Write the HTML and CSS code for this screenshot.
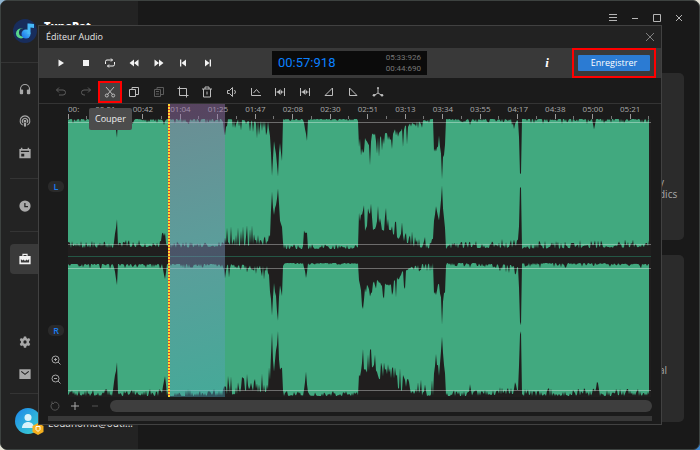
FILE: index.html
```html
<!DOCTYPE html>
<html lang="fr">
<head>
<meta charset="utf-8">
<meta name="viewport" content="width=device-width, initial-scale=1">
<title>TunePat – Éditeur Audio</title>
<link rel="stylesheet" href="styles.css">
</head>
<body>
<div class="window">
  <aside class="sidebar">
    <header class="brand">
      <svg class="logo" viewBox="0 0 24 24" aria-hidden="true">
        <defs><linearGradient id="note" x1="0" y1="1" x2="1" y2="0"><stop offset="0" stop-color="#1668e8"/><stop offset="1" stop-color="#52d0fb"/></linearGradient></defs>
        <circle cx="12" cy="12" r="12" fill="#182d5c"/>
        <circle cx="8" cy="14.500" r="5" fill="#59d68a"/>
        <circle cx="10" cy="13.500" r="4" fill="#182d5c"/>
        <circle cx="13" cy="15" r="4.500" fill="url(#note)"/>
        <path d="M14.500 15V4.500h1.500L21 5v4l-3.500-.5V15z" fill="#46b9f8"/>
      </svg>
      <strong>TunePat</strong>
    </header>
    <nav class="rail">
      <a href="#" aria-label="Musique"><svg viewBox="0 0 16 16"><path d="M2 10V8a6 6 0 0 1 12 0v2" class="line"/><rect x="1" y="8.500" width="4.500" height="6.500" rx="1.500"/><rect x="10.500" y="8.500" width="4.500" height="6.500" rx="1.500"/></svg></a>
      <a href="#" aria-label="Podcast"><svg viewBox="0 0 16 16"><path d="M5 13.500a6.500 6.500 0 1 1 6 0M5.500 10.500a3.500 3.500 0 1 1 5 0" class="line"/><circle cx="8" cy="8" r="1.800"/><rect x="6.500" y="10" width="3" height="5.500" rx="1.300"/></svg></a>
      <a href="#" aria-label="Calendrier"><svg viewBox="0 0 16 16"><path fill-rule="evenodd" d="M.5 2.500h2V1h2v1.500h7V1h2v1.500h2V15H.5zM2.500 6.500h11V5h-11zM3 9v3.500h4V9z"/></svg></a>
      <a href="#" class="after-rule" aria-label="Historique"><svg viewBox="0 0 16 16"><path fill-rule="evenodd" d="M8 .5a7.500 7.500 0 1 0 0 15 7.500 7.500 0 0 0 0-15zM7 4h1.700v4H12v1.500H7z"/></svg></a>
      <a href="#" class="after-rule active" aria-label="Outils"><svg viewBox="0 0 16 16"><path fill-rule="evenodd" d="M4.500 4V1h7v3h4v11H.5V4zM6 2.500V4h4V2.500zM2.500 8v4.500h11V8L11.500 10 10 8.500l-2 2-2-2L4.500 10z"/></svg></a>
      <a href="#" class="push" aria-label="Paramètres"><svg viewBox="0 0 16 16"><path fill-rule="evenodd" d="M6.500.5h3l.5 2.200 1.300.8 2.200-.8 1.500 2.600L13.400 7v2l1.600 1.700-1.500 2.600-2.200-.8-1.300.8-.5 2.200h-3L6 13.300l-1.300-.8-2.200.8L1 10.700 2.600 9V7L1 5.300l1.500-2.600 2.200.8L6 2.700zM8 5.800a2.200 2.200 0 1 0 0 4.400 2.200 2.200 0 0 0 0-4.400z"/></svg></a>
      <a href="#" aria-label="Messages"><svg viewBox="0 0 16 16"><path d="M.5 1.500h15v13H.5z"/><path d="M3 4.500l5 4 5-4" class="line cut"/></svg></a>
    </nav>
    <footer class="account">
      <span class="avatar">
        <svg viewBox="0 0 26 26" aria-hidden="true"><defs><linearGradient id="sky" x1="0" y1="0" x2="1" y2="1"><stop offset="0" stop-color="#1b86ea"/><stop offset="1" stop-color="#3fd6cf"/></linearGradient></defs><circle cx="13" cy="13" r="13" fill="url(#sky)"/><circle cx="13" cy="9.500" r="3.500" fill="#d9f3fb"/><path d="M7 20c0-8 12-8 12 0z" fill="#d9f3fb"/></svg>
        <svg class="badge" viewBox="0 0 12 12" aria-hidden="true"><path d="M6 0l5.500 3v6L6 12 .5 9V3z" fill="#f5b01f"/><path d="M4 3.500h4V6.500L6 8.500 4 6.500z" fill="#f5b01f" stroke="#fff"/></svg>
      </span>
      <span class="mail">Louanoma@outl...</span>
    </footer>
  </aside>

  <main class="page">
    <div class="window-controls">
      <button aria-label="Menu"><svg viewBox="0 0 10 10"><path d="M1 1.500h8M1 4.500h8M1 7.500h8" /></svg></button>
      <button aria-label="Réduire"><svg viewBox="0 0 10 10"><path d="M2 5.500h6"/></svg></button>
      <button aria-label="Agrandir"><svg viewBox="0 0 10 10"><path d="M1.500 1.500h7v7h-7z"/></svg></button>
      <button aria-label="Fermer"><svg viewBox="0 0 10 10"><path d="M2 2l6 6M8 2l-6 6"/></svg></button>
    </div>
    <div class="cards">
      <article class="card"><p>y<br>dics</p></article>
      <article class="card"><p>al</p></article>
    </div>
  </main>

  <section class="editor" role="dialog" aria-labelledby="editor-title">
    <header class="titlebar">
      <h1 id="editor-title">Éditeur Audio</h1>
      <button class="close" aria-label="Fermer l’éditeur"><svg viewBox="0 0 10 10"><path d="M1 1l8 8M9 1l-8 8"/></svg></button>
    </header>

    <div class="transport">
      <div class="icons seven">
        <button aria-label="Lecture"><svg viewBox="0 0 12 12"><path class="solid" d="M3.500 2.500v7L9 6z"/></svg></button>
        <button aria-label="Arrêt"><svg viewBox="0 0 12 12"><path class="solid" d="M3 3h6v6H3z"/></svg></button>
        <button aria-label="Boucle"><svg viewBox="0 0 12 12"><path d="M1.500 7V4.500q0-1.500 1.500-1.500h5.500M7 1.500L8.500 3 7 4.500M10.500 5v2.500q0 1.500-1.500 1.500H3.500M5 7.500L3.500 9 5 10.500"/></svg></button>
        <button aria-label="Reculer"><svg viewBox="0 0 12 12"><path class="solid" d="M6 2.500v7L1.500 6zM10.500 2.500v7L6 6z"/></svg></button>
        <button aria-label="Avancer"><svg viewBox="0 0 12 12"><path class="solid" d="M1.500 2.500v7L6 6zM6 2.500v7L10.500 6z"/></svg></button>
        <button aria-label="Début"><svg viewBox="0 0 12 12"><path class="solid" d="M3 2.500h1.300v7H3zM9 2.500v7L4.500 6z"/></svg></button>
        <button aria-label="Fin"><svg viewBox="0 0 12 12"><path class="solid" d="M7.700 2.500H9v7H7.700zM3 2.500v7L7.500 6z"/></svg></button>
      </div>
      <div class="lcd">
        <output class="now">00:57:918</output>
        <div class="totals"><span>05:33:926</span><span>00:44:690</span></div>
      </div>
      <button class="info" aria-label="Informations">i</button>
      <div class="save-frame"><button class="save">Enregistrer</button></div>
    </div>

    <div class="tools">
      <div class="icons fourteen">
        <button class="dim" aria-label="Annuler"><svg viewBox="0 0 12 12"><path d="M4 1.500L1.500 4 4 6.500M1.500 4H8q2.500 0 2.500 2.500T8 9H4"/></svg></button>
        <button class="dim" aria-label="Rétablir"><svg viewBox="0 0 12 12"><path d="M8 1.500L10.500 4 8 6.500M10.500 4H4Q1.500 4 1.500 6.500T4 9h1"/></svg></button>
        <button class="cutting" aria-label="Couper" aria-describedby="tip"><svg viewBox="0 0 12 12"><path d="M2 1l6.500 7.500M10 1L3.500 8.500"/><circle cx="2.800" cy="9.500" r="1.500"/><circle cx="9.200" cy="9.500" r="1.500"/></svg></button>
        <button aria-label="Copier"><svg viewBox="0 0 12 12"><path d="M1.500 3.500h6v7h-6zM4 3.500v-2h6.500v7h-3"/></svg></button>
        <button class="dim" aria-label="Coller"><svg viewBox="0 0 12 12"><path d="M1.500 3.500h6v7h-6zM4 3.500v-2h6.500v7h-3M3 5.500h3M3 8h3"/></svg></button>
        <button aria-label="Rogner"><svg viewBox="0 0 12 12"><path d="M2.500.5v9h9M.5 2.500h9v9"/></svg></button>
        <button aria-label="Supprimer"><svg viewBox="0 0 12 12"><path d="M1 3h10M4 3V1h4v2M2.500 3v8h7V3M6 5.500v3"/></svg></button>
        <button aria-label="Volume"><svg viewBox="0 0 12 12"><path d="M1.500 4.500h2l3-3v9l-3-3h-2zM8.500 4q2 2 0 4"/></svg></button>
        <button aria-label="Normaliser"><svg viewBox="0 0 12 12"><path d="M1.500 2v7.500H11M3.500 7L6.500 3.500 9.500 7"/></svg></button>
        <button aria-label="Silence au début"><svg viewBox="0 0 12 12"><path d="M1.500 2v8M10.500 2v8M2.500 6H5M9.500 6H7"/><path class="solid" d="M3 6l3.500-3v6zM7 4.500h1v3H7z"/></svg></button>
        <button aria-label="Silence à la fin"><svg viewBox="0 0 12 12"><path d="M1.500 2v8M10.500 2v8M2.500 6H5M9.500 6H7"/><path class="solid" d="M3 6l3.500-3v6zM7 4.500h1v3H7z"/></svg></button>
        <button aria-label="Fondu entrant"><svg viewBox="0 0 12 12"><path d="M9.500 2v7.500H2z"/></svg></button>
        <button aria-label="Fondu sortant"><svg viewBox="0 0 12 12"><path d="M2.500 2v7.500H10z"/></svg></button>
        <button aria-label="Fusionner"><svg viewBox="0 0 12 12"><path d="M6 2v5M2 9.500L6 7l4 2.500"/><circle class="solid" cx="6" cy="2" r="1"/><circle class="solid" cx="2" cy="9.300" r="1.300"/><circle class="solid" cx="10" cy="9.300" r="1.300"/></svg></button>
      </div>
      <div class="tooltip" id="tip" role="tooltip">Couper</div>
    </div>

    <div class="workspace">
      <div class="gutter">
        <button class="channel left">L</button>
        <button class="channel right">R</button>
        <button class="zoom" aria-label="Zoom avant"><svg viewBox="0 0 10 10"><circle cx="4.500" cy="4.500" r="3.500"/><path d="M7 7l2.500 2.500M3 4.500h3M4.500 3v3"/></svg></button>
        <button class="zoom" aria-label="Zoom arrière"><svg viewBox="0 0 10 10"><circle cx="4.500" cy="4.500" r="3.500"/><path d="M7 7l2.500 2.500M3 4.500h3"/></svg></button>
      </div>
      <div class="stage">
        <div class="ruler" id="ruler"></div>
        <svg class="waves" viewBox="0 0 583 278" preserveAspectRatio="none" role="img" aria-label="Forme d’onde stéréo">
          <path id="wave-left" class="wave"/>
          <path id="wave-right" class="wave"/>
          <path class="guide" d="M0 3.500h583M0 125.500h583M0 149.500h583M0 271.500h583"/>
          <path class="split" d="M0 137.500h583"/>
        </svg>
        <div class="selection"></div>
      </div>
    </div>

    <div class="scroll-row">
      <button class="dim" aria-label="Réinitialiser"><svg viewBox="0 0 10 10"><path d="M2 2.500a4 4 0 1 0 2-1.200M2 .5v2h2"/></svg></button>
      <button aria-label="Plus"><svg viewBox="0 0 10 10"><path d="M5 1v8M1 5h8"/></svg></button>
      <button class="dim" aria-label="Moins"><svg viewBox="0 0 10 10"><path d="M2 5h6"/></svg></button>
      <div class="scrollbar"></div>
    </div>
    <div class="overview"></div>
  </section>
</div>
<script src="waveform.js"></script>
</body>
</html>
```
FILE: styles.css
```css
* { box-sizing: border-box; }

body {
  margin: 0;
  min-height: 100vh;
  display: flex;
  background: linear-gradient(135deg, #8fb4cf 0 20%, #e8e4d4 40% 60%, #3f86cf 80%);
  font: 9px/14px "Open Sans", "Noto Sans", sans-serif;
  color: #e4e4e4;
}

button {
  display: flex;
  align-items: center;
  justify-content: center;
  padding: 0;
  border: 0;
  background: none;
  color: inherit;
  font: inherit;
}

.window {
  position: relative;
  flex: 1;
  display: flex;
  overflow: hidden;
  border: 1px solid #3d4240;
  border-radius: 7px;
  background: #191919;
}

/* Sidebar */
.sidebar {
  flex: 0 0 137px;
  min-width: 0;
  display: flex;
  flex-direction: column;
  background: #232323;
}

.brand {
  display: flex;
  height: 62px;
  padding: 18px 0 0 12px;
  gap: 7px;
  border-bottom: 1px solid #343434;
}

.brand strong { color: #fff; font-size: 11px; line-height: 14px; font-weight: 800; }
.logo { width: 24px; height: 24px; }

.rail {
  flex: 1;
  display: flex;
  flex-direction: column;
  gap: 2px;
  padding: 11px 0 4px 9px;
}

.rail a {
  position: relative;
  height: 30px;
  padding: 9px 0 0 9px;
  border-radius: 4px;
}

.rail svg { display: block; width: 12px; height: 12px; fill: #a9a9a9; }
.rail .line { fill: none; stroke: #a9a9a9; stroke-width: 1.5; }
.rail .cut { stroke: #232323; }
.rail .after-rule { margin-top: 21px; }
.rail .after-rule::before {
  content: "";
  position: absolute;
  inset: -13px 0 auto 0;
  border-top: 1px solid #343434;
}
.rail .active { background: #3a3a3a; }
.rail .active svg { fill: #f2f2f2; }
.rail .push { margin-top: auto; }

.account {
  display: flex;
  height: 56px;
  margin-left: 9px;
  padding: 14px 0 0 5px;
  gap: 7px;
  border-top: 1px solid #343434;
}

.avatar { position: relative; width: 26px; height: 26px; }
.avatar svg { display: block; width: 26px; height: 26px; }
.avatar .badge { position: absolute; right: -3px; bottom: -1px; width: 12px; height: 12px; }
.mail { padding-top: 8px; font-size: 10px; }

/* Page behind the editor */
.page { flex: 1; display: flex; flex-direction: column; }

.window-controls {
  display: flex;
  justify-content: flex-end;
  gap: 12px;
  padding: 12px 15px 0 0;
}

.window-controls svg { display: block; width: 10px; height: 10px; fill: none; stroke: #b5b5b5; }

.cards {
  flex: 1;
  display: grid;
  grid-template-rows: 1fr 1fr;
  gap: 15px;
  padding: 50px 15px 27px 60px;
}

.card { display: flex; justify-content: flex-end; align-items: center; border-radius: 5px; background: #2b2b2b; }
.card p { width: 20px; margin: 62px 5px 0 0; font-size: 10px; line-height: 12px; color: #aaa; }

/* Editor dialog */
.editor {
  position: absolute;
  inset: 24px 37px 24px 37px;
  display: flex;
  flex-direction: column;
  border: 1px solid #414141;
  background: #1b1b1b;
}

.titlebar {
  display: flex;
  align-items: center;
  justify-content: space-between;
  height: 22px;
  padding: 0 6px 0 7px;
  background: #222;
}

.titlebar h1 { margin: 0; font-size: 9px; font-weight: 400; }
.close svg { display: block; width: 10px; height: 10px; fill: none; stroke: #808080; }

.transport { display: flex; align-items: center; height: 30px; background: #393939; }

.icons { display: grid; margin-left: 10px; color: #f2f2f2; }
.icons svg { width: 12px; height: 12px; fill: none; stroke: currentColor; }
.icons .solid { fill: currentColor; stroke: none; }
.icons button { height: 22px; }
.seven { width: 171px; grid-template-columns: repeat(7, 1fr); }
.fourteen { width: 341px; grid-template-columns: repeat(14, 1fr); color: #bdbdbd; }
.icons .dim, .dim { color: #5c5c5c; }

.lcd {
  display: flex;
  align-items: center;
  justify-content: space-between;
  width: 155px;
  height: 24px;
  margin-left: 52px;
  padding: 0 6px;
  background: #0b0b0b;
  font-family: Roboto, sans-serif;
}

.now { color: #0a80ff; font-size: 13px; }
.totals { display: flex; flex-direction: column; font-size: 8px; line-height: 11px; color: #777; }

.info {
  width: 12px;
  margin-left: auto;
  font: italic bold 13px/16px "Liberation Serif", serif;
  color: #fff;
}

.save-frame {
  display: flex;
  align-items: center;
  justify-content: center;
  width: 84px;
  height: 30px;
  margin: 0 5px 0 19px;
  border: 2px solid #f00;
}

.save { width: 72px; height: 16px; border-radius: 1px; background: #2b7bd3; color: #fff; }

.tools {
  position: relative;
  display: flex;
  align-items: center;
  height: 26px;
  padding-top: 2px;
  border-bottom: 1px solid #343434;
}

.cutting { border: 2px solid #f00; background: #444; }

.tooltip {
  position: absolute;
  z-index: 2;
  top: 30px;
  left: 50px;
  padding: 4px 6px;
  border-radius: 2px;
  background: #4c4c4c;
  color: #eee;
}

.workspace { flex: 1; display: flex; padding-right: 10px; }

.gutter { width: 29px; display: flex; flex-direction: column; align-items: center; padding: 77px 0 0 5px; }
.channel { width: 16px; height: 11px; border-radius: 5px; background: #2a2a2a; color: #1a7cf2; font-weight: 600; }
.channel.right { margin: 133px 0 14px; }
.zoom { height: 19px; color: #a5a5a5; }
.zoom svg, .scroll-row svg { display: block; width: 10px; height: 10px; fill: none; stroke: currentColor; }

.stage { position: relative; flex: 1; display: flex; flex-direction: column; background: #201e1e; }
.ruler { display: flex; height: 15px; padding-right: 2px; background: #1b1b1b; }

.ruler span {
  flex: 1 1 0;
  min-width: 0;
  display: flex;
  justify-content: center;
  font-size: 8px;
  line-height: 10px;
  color: #aaa;
  background:
    linear-gradient(#999, #999) 50% 100% / 1px 5px no-repeat,
    linear-gradient(#777, #777) 100% 100% / 1px 3px no-repeat;
}

.ruler span:first-child {
  flex-grow: 0.5;
  justify-content: flex-start;
  background-position: 0 100%, 100% 100%;
}

.waves { flex: 1; min-height: 0; width: 100%; height: 278px; }
.wave { fill: #41a97f; }
.guide { stroke: #fff; stroke-opacity: 0.35; }
.split { stroke: #245645; }

.selection {
  position: absolute;
  inset: 0 auto 0 17.200%;
  width: 9.800%;
  background:
    repeating-linear-gradient(#ffd633 0 2px, #d8452b 2px 3px) 0 0 / 2px 100% no-repeat,
    linear-gradient(165deg, rgb(154 110 170 / 0.48), rgb(120 145 185 / 0.48) 50%, rgb(75 170 190 / 0.4));
}

.scroll-row {
  display: flex;
  align-items: center;
  height: 18px;
  padding: 0 9px 0 11px;
  gap: 10px;
  color: #aaa;
}

.scroll-row .dim { color: #555; }
.scrollbar { flex: 1; height: 12px; border-radius: 6px; background: #3e3e3e; }
.overview { height: 5px; margin: 1px 9px 3px; background: #383838; }
```
FILE: waveform.js
```js
const times = ["00:", "00:21", "00:42", "01:04", "01:25", "01:47", "02:08", "02:30",
  "02:51", "03:13", "03:34", "03:55", "04:17", "04:38", "05:00", "05:21"];
document.getElementById("ruler").append(...times.map((time) => {
  const label = document.createElement("span");
  label.textContent = time;
  return label;
}));

// Background jitter: [from, to, depth at the upper edge, depth at the lower edge]
const jitter = [
  [0, 158, 5, 7], [158, 203, 18, 22], [203, 215, 8, 8], [215, 290, 2, 5],
  [290, 340, 20, 22], [340, 366, 8, 16], [366, 378, 8, 8], [378, 430, 4, 7],
  [430, 452, 9, 9], [452, 581, 5, 8],
];

// Quiet passages: [x, depth at the upper edge, depth at the lower edge]
const left = [
  [0, 0, 1], [45, 0, 1], [47, 3, 12], [49, 18, 29], [50, 0, 2], [93, 0, 2], [95, 2, 15], [97, 2, 10], [99, 0, 1],
  [155, 0, 2], [157, 15, 8], [159, 0, 2], [200, 2, 4], [202, 12, 12], [203, 34, 36], [204, 54, 57], [205, 32, 40],
  [206, 22, 32], [208, 35, 42], [210, 55, 57], [211, 34, 40], [212, 24, 28], [214, 42, 22], [215, 0, 0],
  [235, 0, 0], [236, 2, 14], [239, 21, 16], [240, 0, 0],
  [290, 0, 0], [291, 12, 18], [295, 34, 38], [297, 18, 18], [302, 28, 30], [305, 9, 16], [311, 20, 26], [315, 14, 16],
  [319, 14, 22], [323, 20, 16], [327, 10, 12], [331, 14, 10], [335, 8, 6], [345, 3, 2], [355, 1, 1],
  [365, 0, 0], [366, 26, 28], [368, 32, 40], [371, 16, 28], [373, 34, 46], [374, 54, 57], [375, 38, 40],
  [377, 25, 20], [378, 0, 0], [401, 0, 1], [402, 4, 3], [404, 0, 1], [445, 0, 1], [446, 10, 8], [448, 0, 2],
  [450, 1, 3], [451, 18, 22], [452, 55, 58], [453, 54, 58], [454, 0, 0],
  [524, 0, 1], [526, 10, 5], [528, 0, 1], [581, 0, 2],
];
const right = [
  [0, 1, 0], [45, 1, 0], [47, 8, 16], [49, 22, 28], [50, 1, 0], [94, 1, 0], [97, 16, 16], [99, 1, 0],
  [155, 1, 0], [157, 12, 10], [159, 1, 1], [200, 3, 4], [202, 16, 16], [203, 36, 40], [204, 52, 58], [205, 34, 36],
  [206, 20, 22], [208, 32, 42], [210, 57, 60], [211, 34, 36], [212, 22, 24], [214, 32, 28], [215, 0, 0],
  [235, 0, 0], [237, 6, 12], [238, 15, 20], [240, 0, 0],
  [290, 0, 0], [291, 16, 14], [295, 32, 34], [297, 18, 18], [302, 26, 26], [307, 16, 24], [311, 18, 16], [316, 20, 20],
  [321, 22, 20], [327, 16, 10], [335, 8, 4], [345, 3, 2], [355, 1, 0],
  [365, 0, 0], [366, 26, 20], [368, 32, 36], [371, 16, 20], [373, 34, 44], [374, 56, 58], [375, 38, 40],
  [377, 22, 22], [378, 0, 0], [401, 0, 0], [402, 3, 7], [404, 0, 0], [446, 2, 2], [448, 8, 10],
  [450, 1, 2], [451, 18, 22], [452, 59, 58], [453, 58, 58], [454, 0, 0],
  [527, 0, 0], [529, 2, 14], [531, 0, 0], [581, 1, 0],
];

function depthAt(points, x, column) {
  const next = points.findIndex((point) => point[0] >= x);
  if (next <= 0) return points[Math.max(next, 0)][column];
  const a = points[next - 1];
  const b = points[next];
  return a[column] + (b[column] - a[column]) * (x - a[0]) / (b[0] - a[0]);
}

function outline(points, top, bottom, seed) {
  let state = seed;
  const random = () => {
    state = (state * 1664525 + 1013904223) % 4294967296;
    return state / 4294967296;
  };
  const upper = [];
  const lower = [];
  for (let x = 0; x <= 581; x += 1) {
    const band = jitter.find((range) => x >= range[0] && x <= range[1]);
    const up = depthAt(points, x, 1) + band[2] * random() ** 3;
    const down = depthAt(points, x, 2) + band[3] * random() ** 2;
    upper.push(`${x} ${(top + up).toFixed(1)}`);
    lower.unshift(`${x} ${(bottom - down).toFixed(1)}`);
  }
  return `M${upper.join("L")}L${lower.join("L")}Z`;
}

document.getElementById("wave-left").setAttribute("d", outline(left, 0, 130, 7));
document.getElementById("wave-right").setAttribute("d", outline(right, 144, 277, 23));
```
